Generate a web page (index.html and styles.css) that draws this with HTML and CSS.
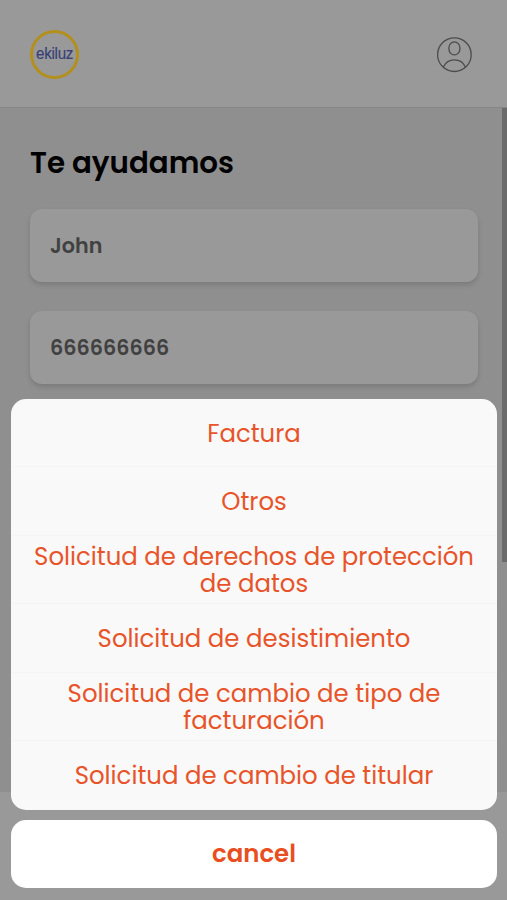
FILE: index.html
```html
<!DOCTYPE html>
<html lang="es">
<head>
<meta charset="utf-8">
<meta name="viewport" content="width=device-width, initial-scale=1">
<title>ekiluz</title>
<link rel="stylesheet" href="styles.css">
</head>
<body>
<div class="app">
  <header class="header">
    <div class="logo"><span>ekiluz</span></div>
    <svg class="user" viewBox="0 0 36 36" fill="none" stroke="#4c4c4c" stroke-width="1.3">
      <circle cx="18.4" cy="17.7" r="16.8"/>
      <rect x="12.9" y="4.9" width="11" height="13" rx="5.5" ry="5.9"/>
      <path d="M7.4 29.9C9.6 24.9 13.6 22.8 18.4 22.8S27.2 24.9 29.4 29.9"/>
    </svg>
  </header>
  <main class="content">
    <h1>Te ayudamos</h1>
    <div class="field">John</div>
    <div class="field">666666666</div>
  </main>
  <div class="scrollbar"></div>
</div>
<div class="sheet">
  <div class="options">
    <div class="option">Factura</div>
    <div class="option">Otros</div>
    <div class="option">Solicitud de derechos de protección de datos</div>
    <div class="option">Solicitud de desistimiento</div>
    <div class="option">Solicitud de cambio de tipo de facturación</div>
    <div class="option">Solicitud de cambio de titular</div>
  </div>
  <div class="cancel">cancel</div>
</div>
</body>
</html>
```
FILE: styles.css
```css
* { box-sizing: border-box; }
body { margin: 0; font-family: Poppins, Inter, "Open Sans", sans-serif; }
.app { position: relative; height: 900px; overflow: hidden; background: #999; }
.header { height: 108px; padding: 2px 35px 0 30px; display: flex; align-items: center; justify-content: space-between; border-bottom: 1.5px solid #868686; }
.logo { width: 49px; height: 49px; border: 3px solid #b3901c; border-radius: 50%; display: flex; align-items: center; justify-content: center; color: #383f76; font: 400 16px/1 "Liberation Sans", sans-serif; letter-spacing: -.3px; -webkit-text-stroke: .15px #383f76; }
.logo span { transform: scaleX(.95); margin-top: -2px; }
.user { width: 36px; height: 36px; margin-top: 1px; }
.content { height: 684px; padding: 37px 30px 0; background: #8f8f8f; }
h1 { margin: 0 0 27.5px; font-size: 29.3px; line-height: 36px; font-weight: 600; color: #000; white-space: nowrap; }
.field { width: 447.5px; height: 73px; margin-bottom: 29.5px; padding-left: 20px; border-radius: 12px; background: #999; box-shadow: 0 3px 5px rgba(0,0,0,.14); font-size: 20.7px; line-height: 73px; font-weight: 600; color: #414141; }
.scrollbar { position: absolute; right: 0; top: 108px; width: 5px; height: 454px; background: #6b6b6b; }
.sheet { position: absolute; left: 11px; top: 399px; width: 486px; display: flex; flex-direction: column; gap: 10px; color: #e8542a; }
.options { height: 410.5px; display: grid; grid-template-rows: repeat(6, 1fr); border-radius: 15px; background: #f9f9f9; overflow: hidden; }
.option { display: flex; align-items: center; justify-content: center; padding: 1px 20px 0; text-align: center; font-size: 24.42px; line-height: 27px; border-bottom: 1px solid #f5f5f5; }
.option:last-child { border-bottom: 0; }
.cancel { height: 68px; border-radius: 15px; background: #fff; display: flex; align-items: center; justify-content: center; font-size: 24.42px; font-weight: 600; color: #e84e20; }
```
